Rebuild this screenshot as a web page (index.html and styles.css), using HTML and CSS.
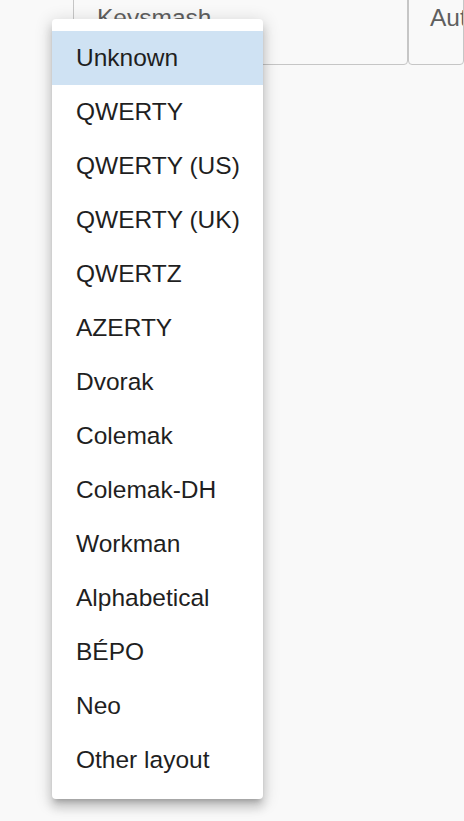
FILE: index.html
```html
<!DOCTYPE html>
<html>
<head>
<meta charset="utf-8">
<link rel="stylesheet" href="styles.css">
</head>
<body>
<div class="fields">
  <div class="field field-main"><span class="label">Keysmash</span></div>
  <div class="field field-side"><span class="label">Autocorrect</span></div>
</div>
<ul class="menu">
  <li class="item selected">Unknown</li>
  <li class="item">QWERTY</li>
  <li class="item">QWERTY (US)</li>
  <li class="item">QWERTY (UK)</li>
  <li class="item">QWERTZ</li>
  <li class="item">AZERTY</li>
  <li class="item">Dvorak</li>
  <li class="item">Colemak</li>
  <li class="item">Colemak-DH</li>
  <li class="item">Workman</li>
  <li class="item">Alphabetical</li>
  <li class="item">BÉPO</li>
  <li class="item">Neo</li>
  <li class="item">Other layout</li>
</ul>
</body>
</html>
```

FILE: styles.css
```css
html, body {
  margin: 0;
  padding: 0;
  height: 100%;
  background: #f9f9f9;
  font-family: "Liberation Sans", Arial, sans-serif;
  overflow: hidden;
}

.fields {
  display: flex;
  margin: -10px 0 0 73px;
  height: 75px;
}

.field {
  box-sizing: border-box;
  border: 1px solid #c6c6c6;
  border-radius: 4px;
  height: 75px;
  padding: 13px 0 0 23px;
  font-size: 24.5px;
  color: #5f5f5f;
  white-space: nowrap;
  overflow: hidden;
}

.field-main {
  width: 335px;
  flex: none;
}

.field-side {
  flex: 1;
  padding-left: 21px;
}

.menu {
  position: absolute;
  left: 52px;
  top: 19px;
  width: 211px;
  margin: 0;
  padding: 12px 0;
  list-style: none;
  background: #fff;
  border-radius: 4px;
  box-shadow: 0 5px 5px -3px rgba(0,0,0,0.2), 0 8px 10px 1px rgba(0,0,0,0.14), 0 3px 16px 3px rgba(0,0,0,0.12);
}

.item {
  height: 54px;
  display: flex;
  align-items: center;
  padding-left: 24px;
  font-size: 24.5px;
  color: #1f1f1f;
  white-space: nowrap;
}

.item.selected {
  background: #cfe2f3;
}
```
